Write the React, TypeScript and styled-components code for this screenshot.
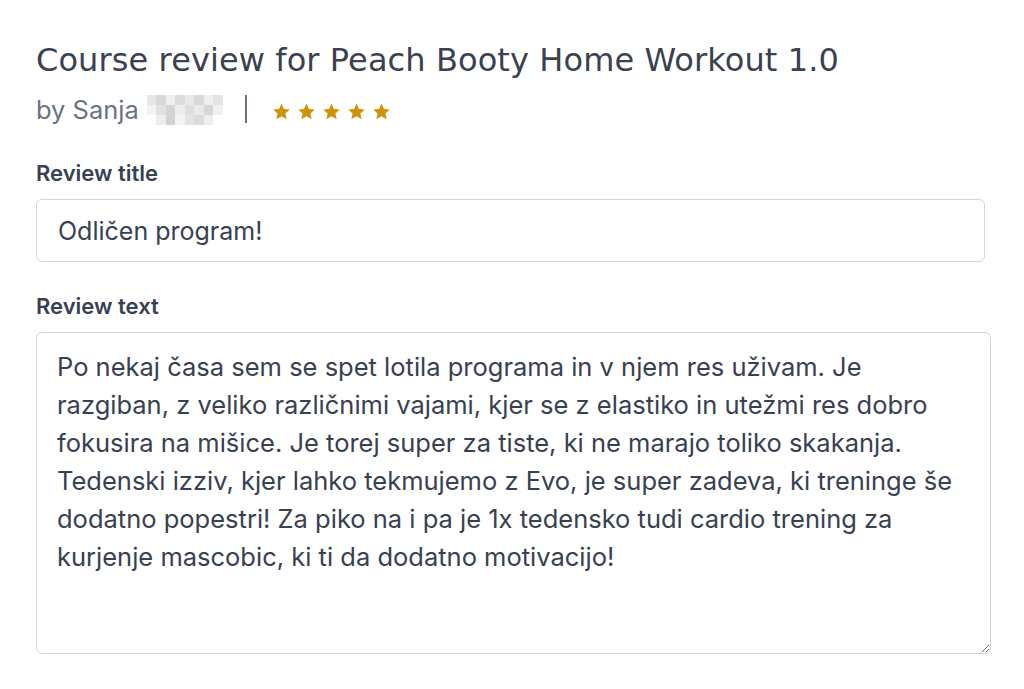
import React from 'react';
import styled, { createGlobalStyle } from 'styled-components';

const GlobalStyle = createGlobalStyle`
  html, body {
    margin: 0;
    padding: 0;
    background: #ffffff;
  }
  body {
    font-family: Inter, "Liberation Sans", sans-serif;
    color: #374151;
  }
`;

const Page = styled.div`
  padding: 35px 33px 0 36px;
  width: 1024px;
  box-sizing: border-box;
`;

const Title = styled.h1`
  margin: 0;
  font-family: "DejaVu Sans", sans-serif;
  font-weight: 400;
  font-size: 32px;
  line-height: 50px;
  letter-spacing: 0.1px;
  color: #3a4150;
`;

const Meta = styled.div`
  display: flex;
  align-items: center;
  margin-top: 5px;
  height: 38px;
`;

const Author = styled.span`
  font-size: 25.5px;
  color: #6b7280;
  display: flex;
  align-items: center;
  gap: 8px;
`;

const Blur = styled.span`
  display: inline-grid;
  grid-template-columns: repeat(8, 9.5px);
  grid-template-rows: repeat(3, 10px);
  margin-top: 2px;
`;

const Pixel = styled.span<{ $shade: string }>`
  background: ${p => p.$shade};
`;

const Divider = styled.span`
  width: 2px;
  height: 28px;
  background: #6b7280;
  margin: 0 25px 0 22px;
`;

const Stars = styled.div`
  display: flex;
  gap: 6px;
  margin-top: 4px;
`;

const Field = styled.div`
  display: flex;
  flex-direction: column;
  gap: 12px;
`;

const Label = styled.label`
  font-size: 22px;
  font-weight: 600;
  color: #374151;
  line-height: 28px;
`;

const Input = styled.input`
  height: 63px;
  width: 949px;
  box-sizing: border-box;
  border: 1.5px solid #d1d5db;
  border-radius: 6px;
  padding: 0 21px;
  font-family: Inter, "Liberation Sans", sans-serif;
  font-size: 25px;
  color: #374151;
  outline: none;
`;

const TextArea = styled.textarea`
  width: 955px;
  height: 322px;
  box-sizing: border-box;
  border: 1.5px solid #d1d5db;
  border-radius: 6px;
  padding: 15px 20px;
  font-family: Inter, "Liberation Sans", sans-serif;
  font-size: 25.5px;
  line-height: 38px;
  color: #374151;
  outline: none;
  resize: both;
`;

const Form = styled.div`
  display: flex;
  flex-direction: column;
  gap: 30px;
  margin-top: 31px;
`;

const shades = [
  '#e5e7eb', '#d6d8db', '#f0f0f0', '#dcdcdc', '#e8e8e8', '#d9d9d9', '#efefef', '#e3e3e3',
  '#f3f3f3', '#e1e1e1', '#d4d4d4', '#ececec', '#dedede', '#e9e9e9', '#d7d7d7', '#f1f1f1',
  '#ffffff', '#ededed', '#d2d2d2', '#f4f4f4', '#e4e4e4', '#dbdbdb', '#eeeeee', '#ffffff',
];

const Star = () => (
  <svg width="19" height="19" viewBox="0 0 24 24">
    <path
      d="M12 1.8l3.1 6.9 7.4.7-5.6 5 1.7 7.4L12 18l-6.6 3.8 1.7-7.4-5.6-5 7.4-.7z"
      fill="#cf9406"
    />
  </svg>
);

const reviewText =
  'Po nekaj časa sem se spet lotila programa in v njem res uživam. Je razgiban, z veliko različnimi vajami, kjer se z elastiko in utežmi res dobro fokusira na mišice. Je torej super za tiste, ki ne marajo toliko skakanja. Tedenski izziv, kjer lahko tekmujemo z Evo, je super zadeva, ki treninge še dodatno popestri! Za piko na i pa je 1x tedensko tudi cardio trening za kurjenje mascobic, ki ti da dodatno motivacijo!';

export default function App() {
  return (
    <Page>
      <GlobalStyle />
      <Title>Course review for Peach Booty Home Workout 1.0</Title>
      <Meta>
        <Author>
          by Sanja
          <Blur>
            {shades.map((s, i) => (
              <Pixel key={i} $shade={s} />
            ))}
          </Blur>
        </Author>
        <Divider />
        <Stars>
          {[0, 1, 2, 3, 4].map(i => (
            <Star key={i} />
          ))}
        </Stars>
      </Meta>
      <Form>
        <Field>
          <Label>Review title</Label>
          <Input defaultValue="Odličen program!" />
        </Field>
        <Field>
          <Label>Review text</Label>
          <TextArea defaultValue={reviewText} />
        </Field>
      </Form>
    </Page>
  );
}
